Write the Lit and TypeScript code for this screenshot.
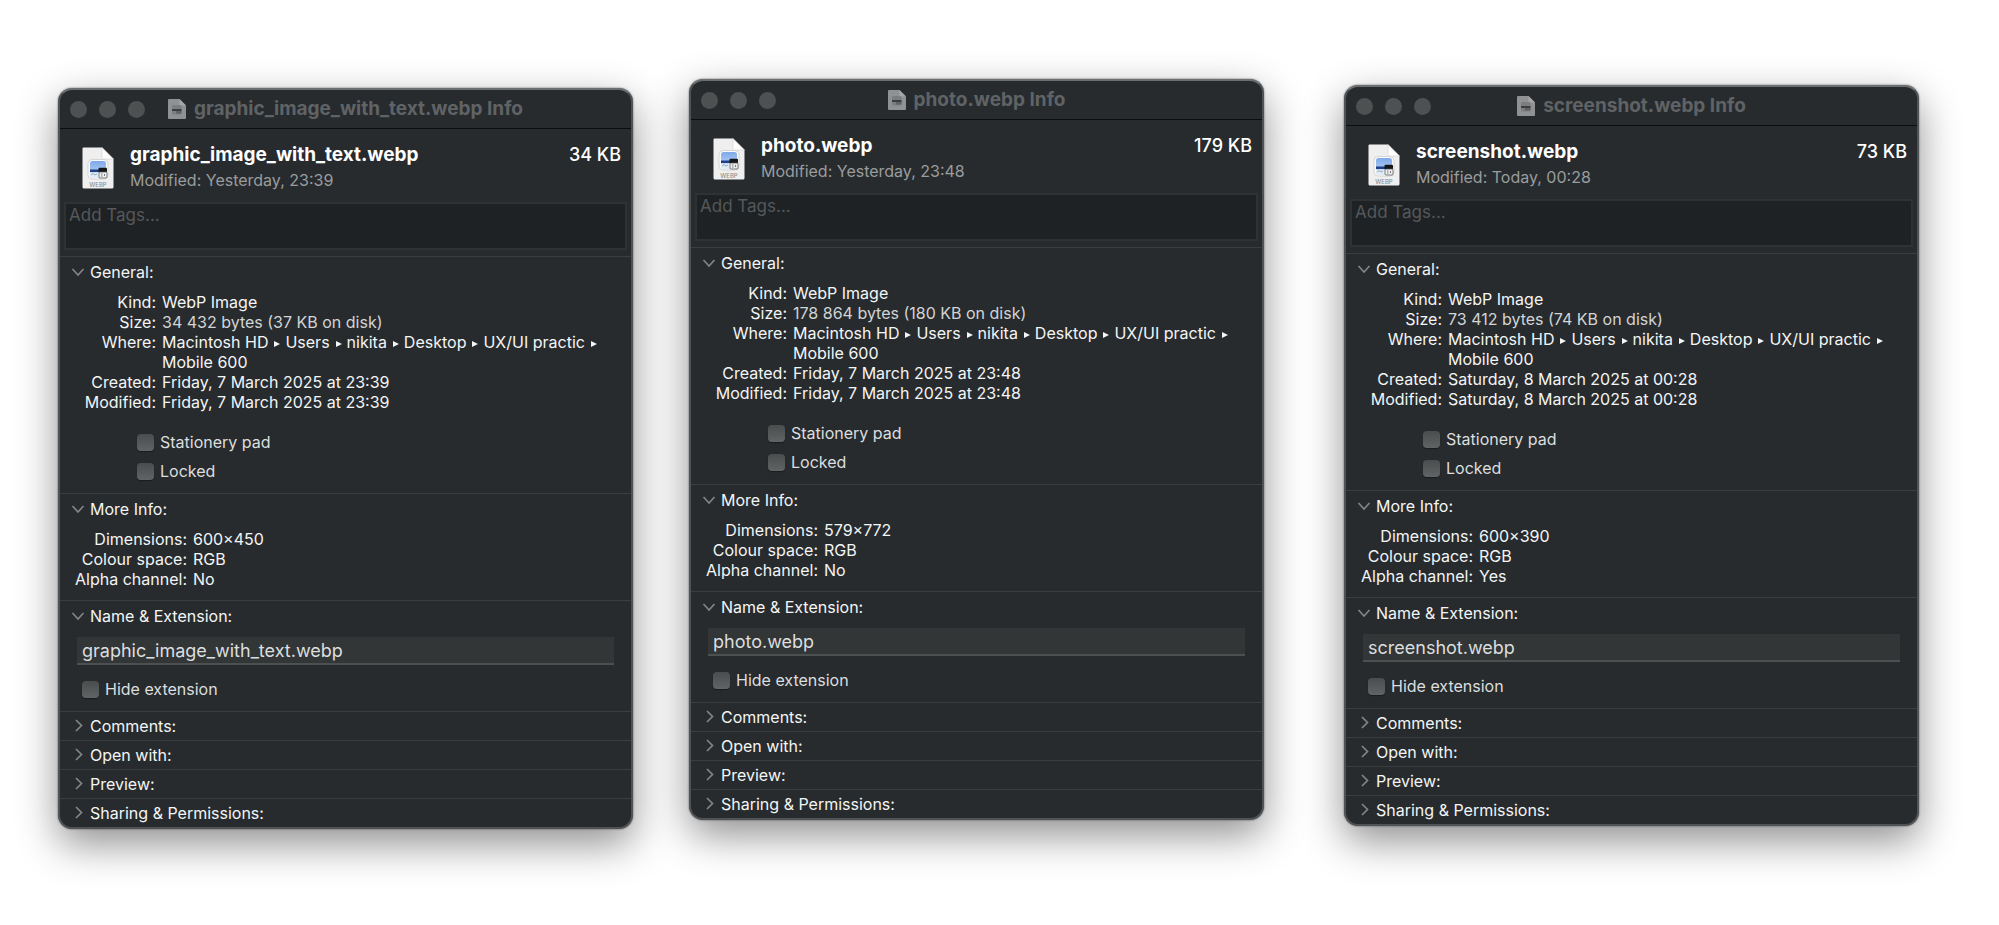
import { LitElement, html, css, svg, nothing } from "lit";
import { customElement, property } from "lit/decorators.js";

interface FileInfo {
  id: string;
  name: string;
  sizeShort: string;
  modifiedShort: string;
  size: string;
  created: string;
  modified: string;
  dimensions: string;
  alpha: string;
}

const FILES: FileInfo[] = [
  {
    id: "graphic",
    name: "graphic_image_with_text.webp",
    sizeShort: "34 KB",
    modifiedShort: "Yesterday, 23:39",
    size: "34 432 bytes (37 KB on disk)",
    created: "Friday, 7 March 2025 at 23:39",
    modified: "Friday, 7 March 2025 at 23:39",
    dimensions: "600×450",
    alpha: "No",
  },
  {
    id: "photo",
    name: "photo.webp",
    sizeShort: "179 KB",
    modifiedShort: "Yesterday, 23:48",
    size: "178 864 bytes (180 KB on disk)",
    created: "Friday, 7 March 2025 at 23:48",
    modified: "Friday, 7 March 2025 at 23:48",
    dimensions: "579×772",
    alpha: "No",
  },
  {
    id: "screenshot",
    name: "screenshot.webp",
    sizeShort: "73 KB",
    modifiedShort: "Today, 00:28",
    size: "73 412 bytes (74 KB on disk)",
    created: "Saturday, 8 March 2025 at 00:28",
    modified: "Saturday, 8 March 2025 at 00:28",
    dimensions: "600×390",
    alpha: "Yes",
  },
];

const PATH = ["Macintosh HD", "Users", "nikita", "Desktop", "UX/UI practic"];

@customElement("file-icon")
class FileIcon extends LitElement {
  static styles = css`
    :host {
      display: block;
      flex: none;
    }
    svg {
      display: block;
      width: 100%;
      height: 100%;
    }
    .label {
      font: 500 6px Inter, sans-serif;
      fill: #8f8f8f;
    }
  `;
  render() {
    return html`<svg viewBox="0 0 32 42" aria-hidden="true">
      <defs>
        <linearGradient id="sky" x1="0" y1="0" x2="0" y2="1">
          <stop offset="0" stop-color="#7fa9e8" />
          <stop offset="1" stop-color="#c3dbf8" />
        </linearGradient>
      </defs>
      <path d="M1.5 0.5H20L31.5 12V40a1.5 1.5 0 0 1-1.5 1.5H2A1.5 1.5 0 0 1 .5 40V1.5a1 1 0 0 1 1-1Z" fill="#efefef" />
      <path d="M20 .5V10.5a1.5 1.500 0 0 0 1.5 1.5H31.5Z" fill="#fff" stroke="#cfcfcf" stroke-width=".6" />
      <rect x="6" y="12.5" width="20" height="19.500" rx="4" fill="#fafafa" stroke="#c9c9c9" stroke-width=".7" />
      <rect x="8" y="14" width="16" height="16.500" rx="2.500" fill="url(#sky)" />
      <rect x="8" y="22.5" width="16" height="2.800" fill="#1d3f86" />
      <path d="M8 25.300H24V28a2.500 2.500 0 0 1-2.500 2.500H10.500A2.500 2.500 0 0 1 8 28Z" fill="#e3ecf4" />
      <path d="M9 28l2-1.500 2 1.500 2-1" stroke="#6b8bb0" stroke-width=".7" fill="none" />
      <rect x="16.5" y="20.800" width="8.500" height="4.500" rx="1" fill="#15171a" />
      <rect x="17" y="25" width="8" height="6" rx="1" fill="#eeeeee" stroke="#4a4d51" stroke-width=".7" />
      <path d="M19 27h1.500M19 29h1.500M22.500 27v2" stroke="#6a6e73" stroke-width=".9" />
      <text class="label" x="16" y="40" text-anchor="middle">WEBP</text>
    </svg>`;
  }
}

@customElement("proxy-icon")
class ProxyIcon extends LitElement {
  static styles = css`
    :host {
      display: block;
      flex: none;
    }
    svg {
      display: block;
      width: 100%;
      height: 100%;
    }
  `;
  render() {
    return html`<svg viewBox="0 0 18 20" aria-hidden="true">
      <path d="M1 0H11.500L18 6.500V19a1 1 0 0 1-1 1H1a1 1 0 0 1-1-1V1a1 1 0 0 1 1-1Z" fill="#8f9192" />
      <path d="M11.500 0V5.500a1 1 0 0 0 1 1H18Z" fill="#a5a7a8" />
      <rect x="4" y="6" width="9.500" height="9.500" rx="1.500" fill="#7b7d7f" />
      <rect x="4" y="10" width="9.500" height="2" fill="#3c3f41" />
      <rect x="8" y="12" width="5.500" height="2.500" fill="#5f6264" />
    </svg>`;
  }
}

const chevron = (open: boolean) =>
  svg`<svg class="chevron" viewBox="0 0 14 14" aria-hidden="true"><path d=${
    open ? "M1.500 4L7 10L12.500 4" : "M5 1L10.500 6.500L5 12"
  } /></svg>`;

@customElement("info-window")
class InfoWindow extends LitElement {
  @property({ attribute: false }) file!: FileInfo;

  static styles = css`
    :host {
      display: block;
      box-sizing: border-box;
      color: #f4f5f5;
      background: #272b2e;
      border: 2px solid #505355;
      border-top-color: #6c6f70;
      border-radius: 14px;
      box-shadow: 0 0 2px rgba(0, 0, 0, 0.6), 0 15px 40px rgba(0, 0, 0, 0.44);
      font: 400 16px/20px Inter, "Liberation Sans", sans-serif;
    }
    .titlebar {
      display: grid;
      grid-template-columns: 1fr auto 1fr;
      align-items: center;
      height: 38px;
      padding: 0 10px;
      border-bottom: 1px solid #0b0d0e;
    }
    .lights {
      display: flex;
      gap: 12px;
    }
    .light {
      width: 17px;
      height: 17px;
      padding: 0;
      border: 0;
      border-radius: 50%;
      background: #4e5152;
    }
    .title {
      display: flex;
      align-items: center;
      gap: 8px;
      margin: 0;
      font-size: 19px;
      line-height: 24px;
      font-weight: 700;
      color: #606365;
      white-space: nowrap;
    }
    .title proxy-icon {
      width: 18px;
      height: 20px;
    }
    .summary {
      display: flex;
      align-items: center;
      gap: 16px;
      padding: 13px 10px 10px 22px;
    }
    .summary file-icon {
      width: 32px;
      height: 42px;
      margin-top: 2px;
    }
    .names {
      flex: 1;
      min-width: 0;
    }
    .filename {
      margin: 0;
      font-size: 19px;
      line-height: 26px;
      font-weight: 700;
      color: #fff;
    }
    .sub {
      margin: 0;
      font-size: 16px;
      line-height: 24px;
      color: #9a9c9d;
    }
    .short {
      align-self: flex-start;
      font-size: 18px;
      line-height: 26px;
      font-weight: 500;
      color: #fff;
    }
    .tags {
      display: block;
      box-sizing: border-box;
      width: calc(100% - 8px);
      height: 48px;
      margin: 0 4px 6px;
      padding: 0 3px;
      resize: none;
      border: 2px solid #2f3233;
      background: #1e2224;
      color: #f2f3f3;
      font: 400 17px/22px Inter, sans-serif;
      outline: none;
    }
    .tags::placeholder {
      color: #55585a;
      opacity: 1;
    }
    section {
      border-top: 1px solid #3a3e40;
    }
    .toggle {
      display: flex;
      align-items: center;
      gap: 5px;
      width: 100%;
      height: 28px;
      padding: 0 0 0 11px;
      border: 0;
      background: none;
      color: inherit;
      font: inherit;
      text-align: left;
    }
    .toggle[aria-expanded="true"] {
      height: 30px;
    }
    h3 {
      margin: 0;
      font: inherit;
    }
    .chevron {
      width: 14px;
      height: 14px;
      fill: none;
      stroke: #828586;
      stroke-width: 1.7;
    }
    dl {
      display: grid;
      grid-template-columns: 96px 1fr;
      column-gap: 6px;
      margin: 5px 20px 0 0;
    }
    dl.wide {
      grid-template-columns: 127px 1fr;
      padding-bottom: 11px;
    }
    dt {
      text-align: right;
      white-space: nowrap;
    }
    dd {
      margin: 0;
    }
    .soft {
      color: #d2d4d5;
    }
    .crumb {
      white-space: nowrap;
    }
    .arrow {
      display: inline-block;
      width: 6px;
      height: 6px;
      margin: 0 5px 0 6px;
      vertical-align: middle;
      fill: currentColor;
    }
    .checks {
      display: grid;
      gap: 9px;
      padding: 20px 0 12px 77px;
    }
    .check {
      display: flex;
      align-items: center;
      gap: 6px;
      width: fit-content;
      color: #dcdedf;
    }
    .check input {
      appearance: none;
      width: 17px;
      height: 17px;
      margin: 0;
      border-radius: 4px;
      background: linear-gradient(#4a4d4e, #616465);
      box-shadow: 0 1px 1px rgba(0, 0, 0, 0.35);
    }
    .name {
      display: block;
      box-sizing: border-box;
      width: calc(100% - 34px);
      height: 28px;
      margin: 6px 17px 0;
      padding: 0 5px;
      border: 0;
      border-bottom: 2px solid #4c5051;
      background: #323637;
      color: #dcdedf;
      font: 400 18px/26px Inter, sans-serif;
      outline: none;
    }
    .hide {
      padding: 14px 0 12px 22px;
    }
  `;

  private section(title: string, body?: unknown) {
    return html`<section>
      <h3>
        <button class="toggle" aria-expanded=${body ? "true" : "false"}>
          ${chevron(!!body)}<span>${title}</span>
        </button>
      </h3>
      ${body ?? nothing}
    </section>`;
  }

  private check(id: string, label: string) {
    return html`<label class="check" for=${id}><input type="checkbox" id=${id} />${label}</label>`;
  }

  render() {
    const f = this.file;
    return html`
      <header class="titlebar">
        <div class="lights">
          <button class="light" aria-label="Close"></button>
          <button class="light" aria-label="Minimise"></button>
          <button class="light" aria-label="Zoom"></button>
        </div>
        <h1 class="title"><proxy-icon></proxy-icon><span>${f.name} Info</span></h1>
      </header>
      <div class="summary">
        <file-icon></file-icon>
        <div class="names">
          <h2 class="filename">${f.name}</h2>
          <p class="sub">Modified: ${f.modifiedShort}</p>
        </div>
        <span class="short">${f.sizeShort}</span>
      </div>
      <textarea class="tags" aria-label="Tags" placeholder="Add Tags..."></textarea>
      ${this.section(
        "General:",
        html`<dl>
            <dt>Kind:</dt>
            <dd>WebP Image</dd>
            <dt>Size:</dt>
            <dd class="soft">${f.size}</dd>
            <dt>Where:</dt>
            <dd>
              ${PATH.map(
                (p) =>
                  html`<span class="crumb">${p}<svg class="arrow" viewBox="0 0 6 6" aria-hidden="true"><path d="M0 0L6 3L0 6Z" /></svg></span><wbr />`
              )}<span class="crumb">Mobile 600</span>
            </dd>
            <dt>Created:</dt>
            <dd>${f.created}</dd>
            <dt>Modified:</dt>
            <dd>${f.modified}</dd>
          </dl>
          <div class="checks">
            ${this.check("stationery", "Stationery pad")} ${this.check("locked", "Locked")}
          </div>`
      )}
      ${this.section(
        "More Info:",
        html`<dl class="wide">
          <dt>Dimensions:</dt>
          <dd>${f.dimensions}</dd>
          <dt>Colour space:</dt>
          <dd>RGB</dd>
          <dt>Alpha channel:</dt>
          <dd>${f.alpha}</dd>
        </dl>`
      )}
      ${this.section(
        "Name & Extension:",
        html`<input class="name" type="text" aria-label="Name and extension" .value=${f.name} />
          <div class="hide">${this.check("hide", "Hide extension")}</div>`
      )}
      ${this.section("Comments:")} ${this.section("Open with:")} ${this.section("Preview:")}
      ${this.section("Sharing & Permissions:")}
    `;
  }
}

@customElement("app-root")
class AppRoot extends LitElement {
  static styles = css`
    :host {
      display: block;
      min-height: 100vh;
      background: #fff;
    }
    .desktop {
      display: flex;
      align-items: flex-start;
      gap: 56px;
      padding: 0 80px 80px 58px;
    }
    info-window {
      flex: 1 1 0;
      min-width: 0;
    }
    .graphic {
      margin-top: 88px;
    }
    .photo {
      margin-top: 79px;
    }
    .screenshot {
      margin-top: 85px;
      margin-left: 24px;
    }
    @media (max-width: 1500px) {
      .desktop {
        flex-direction: column;
        align-items: stretch;
        padding: 0 58px 80px;
      }
      .desktop info-window {
        flex: none;
        margin: 40px 0 0;
      }
    }
  `;
  render() {
    return html`<main class="desktop">
      ${FILES.map((f) => html`<info-window class=${f.id} .file=${f}></info-window>`)}
    </main>`;
  }
}
